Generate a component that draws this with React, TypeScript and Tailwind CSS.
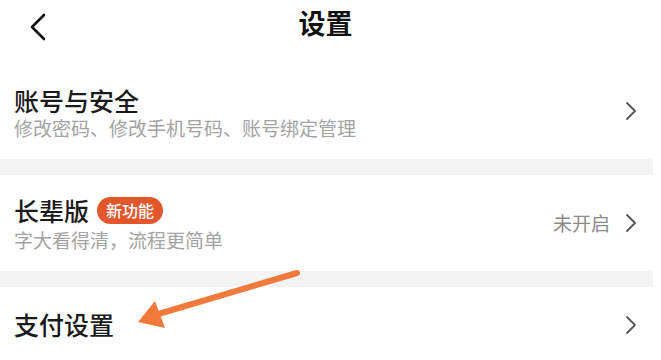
const font = { fontFamily: '"Noto Sans CJK SC", "Noto Sans", sans-serif' }

function Chevron() {
  return (
    <svg width="12" height="20" viewBox="0 0 12 20" fill="none" className="shrink-0">
      <path d="M2 2l8 8-8 8" stroke="#555" strokeWidth="1.8" strokeLinecap="round" strokeLinejoin="round" />
    </svg>
  )
}

function Band() {
  return <div className="h-[16px] w-[653px] bg-[#f4f4f4]" />
}

export default function App() {
  return (
    <div className="relative w-[661px] h-[360px] overflow-hidden bg-white" style={font}>
      {/* header */}
      <div className="relative h-[63px] flex justify-center pr-[10px]">
        <svg
          width="18"
          height="28"
          viewBox="0 0 18 28"
          fill="none"
          className="absolute left-[29px] top-[13px]"
        >
          <path d="M15 2L3 14l12 12" stroke="#111" strokeWidth="2.6" strokeLinecap="round" strokeLinejoin="round" />
        </svg>
        <h1 className="text-[27px] leading-[46px] font-bold text-[#111]">设置</h1>
      </div>

      {/* 账号与安全 */}
      <div className="h-[96px] flex items-center justify-between pl-[14px] pr-[24px]">
        <div className="self-start pt-[22px]">
          <p className="text-[25px] leading-[30px] font-medium text-[#1a1a1a]">账号与安全</p>
          <p className="text-[19px] leading-[25px] text-[#a3a3a3]">修改密码、修改手机号码、账号绑定管理</p>
        </div>
        <Chevron />
      </div>

      <Band />

      {/* 长辈版 */}
      <div className="h-[96px] flex items-center justify-between pl-[14px] pr-[24px]">
        <div className="self-start pt-[21px]">
          <div className="h-[28px] flex items-center gap-[8px]">
            <span className="text-[25px] leading-[28px] font-medium text-[#1a1a1a]">长辈版</span>
            <span className="h-[27px] px-[9px] rounded-full bg-[#e4562c] text-white text-[16px] leading-[27px] font-medium">
              新功能
            </span>
          </div>
          <p className="mt-[3px] text-[19px] leading-[26px] text-[#a3a3a3]">字大看得清，流程更简单</p>
        </div>
        <div className="flex items-center gap-[15px]">
          <span className="text-[19px] leading-[26px] text-[#8a8a8a]">未开启</span>
          <Chevron />
        </div>
      </div>

      <Band />

      {/* 支付设置 */}
      <div className="h-[72px] flex justify-between pl-[14px] pr-[24px]">
        <p className="pt-[22px] text-[25px] leading-[30px] font-medium text-[#1a1a1a]">支付设置</p>
        <div className="pt-[28px]">
          <Chevron />
        </div>
      </div>

      {/* annotation arrow */}
      <svg width="661" height="360" className="absolute inset-0 pointer-events-none">
        <path d="M297 273 L155 315" stroke="#f07a3c" strokeWidth="6" strokeLinecap="round" />
        <polygon points="138,322 155,301 165,328" fill="#f07a3c" />
      </svg>
    </div>
  )
}
